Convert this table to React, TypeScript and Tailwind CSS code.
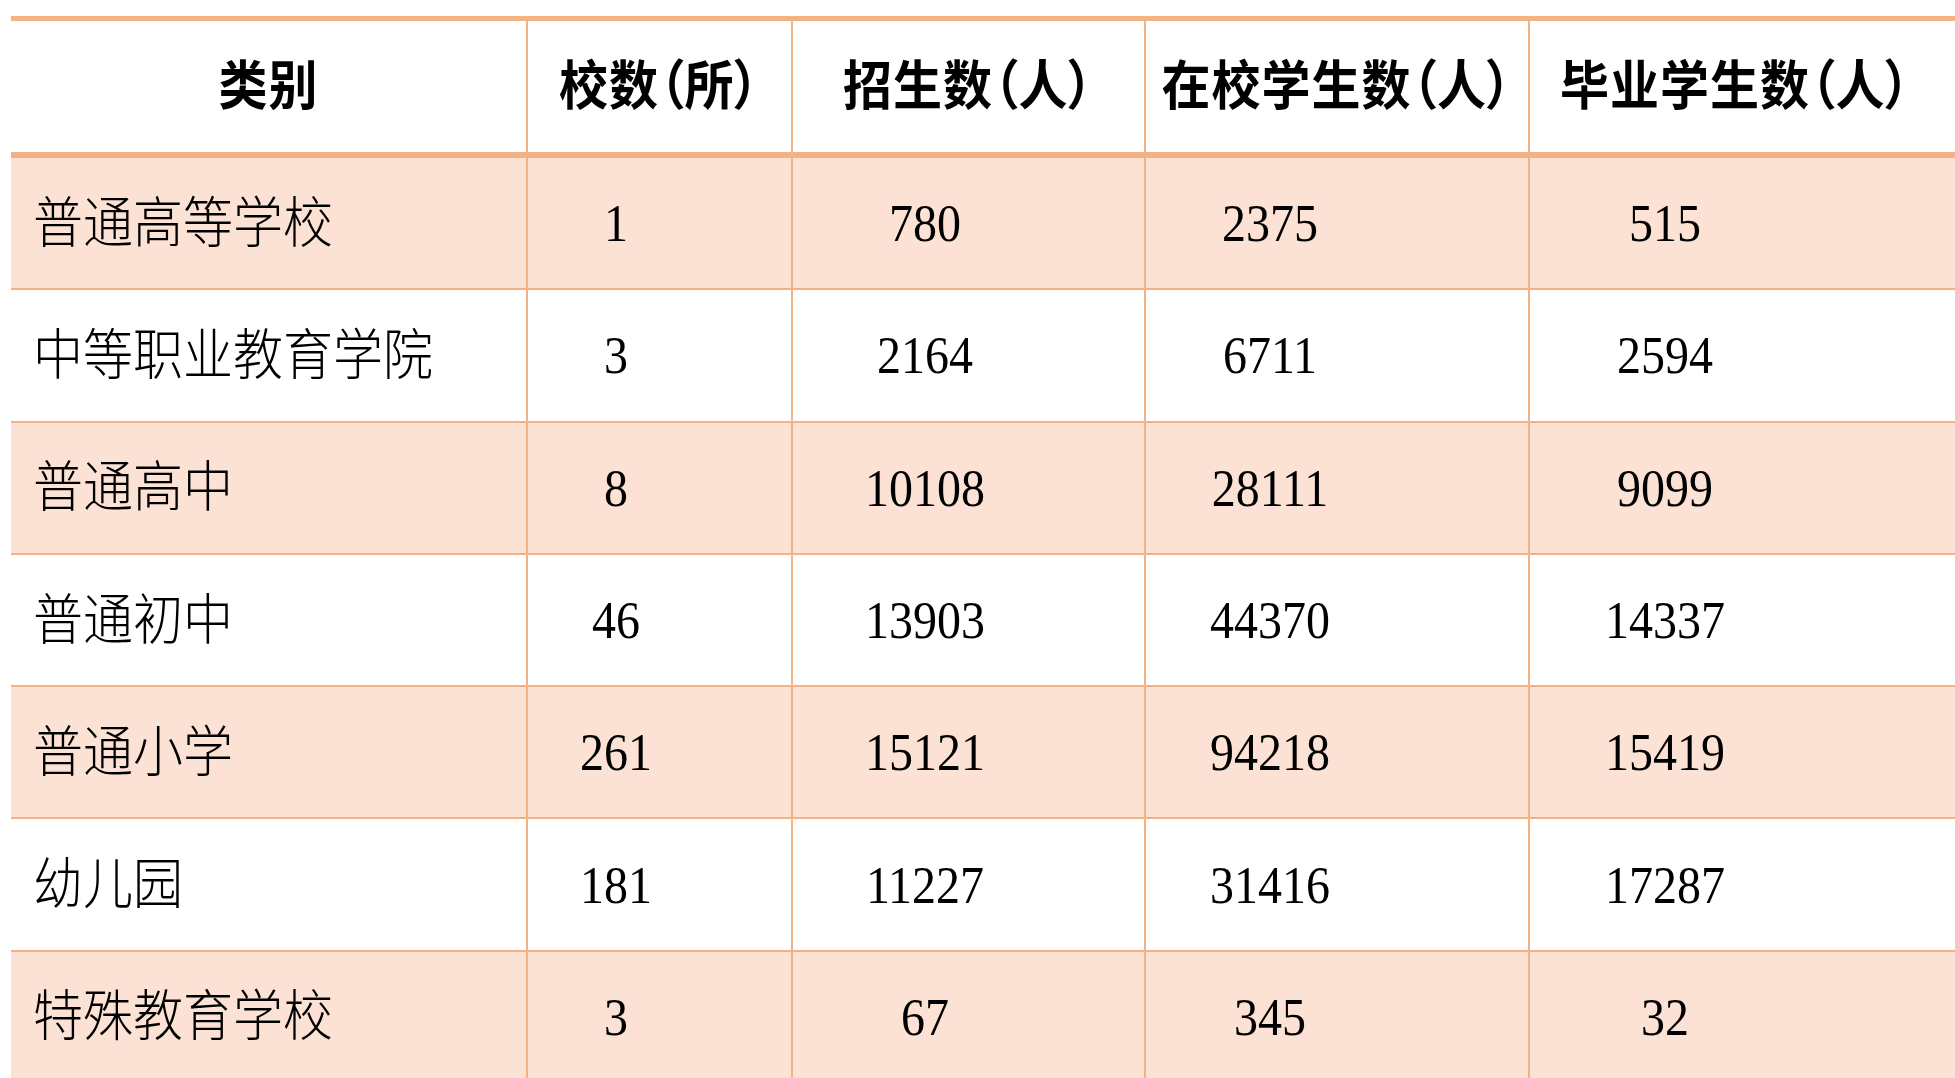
const headers = ['类别', '校数（所）', '招生数（人）', '在校学生数（人）', '毕业学生数（人）']

const rows: [string, string, string, string, string][] = [
  ['普通高等学校', '1', '780', '2375', '515'],
  ['中等职业教育学院', '3', '2164', '6711', '2594'],
  ['普通高中', '8', '10108', '28111', '9099'],
  ['普通初中', '46', '13903', '44370', '14337'],
  ['普通小学', '261', '15121', '94218', '15419'],
  ['幼儿园', '181', '11227', '31416', '17287'],
  ['特殊教育学校', '3', '67', '345', '32'],
]

// column widths incl. the 2px right rule
const colWidths = ['w-[517px]', 'w-[265px]', 'w-[353px]', 'w-[384px]', 'w-[460px]']
// numbers sit left of centre in each cell
const numPad = ['', 'pr-[87px]', 'pr-[87px]', 'pr-[134px]', 'pr-[188px]']
const headPad = ['justify-center', 'justify-center', 'justify-center', 'justify-center', 'justify-start pl-[30px]']

export default function App() {
  return (
    <div
      className="w-screen h-screen overflow-hidden bg-white pt-4 pl-[11px] text-black"
      style={{ fontFamily: "'Liberation Serif', 'Noto Sans CJK SC', serif" }}
    >
      <div className="w-[1979px] border-t-[5px] border-[#F4B183]">
        {/* Header */}
        <div className="flex h-[137px] border-b-[6px] border-[#F4B183] [font-feature-settings:'palt']">
          {headers.map((h, i) => (
            <div
              key={h}
              className={`${colWidths[i]} ${headPad[i]} shrink-0 flex items-center whitespace-nowrap border-r-2 border-[#F4B183] text-[49px] font-bold`}
            >
              <span className="inline-block scale-y-110 tracking-[1px]">{h}</span>
            </div>
          ))}
        </div>

        {/* Body */}
        {rows.map((row, r) => (
          <div
            key={row[0]}
            className={`flex h-[132.3px] border-b-2 border-[#F4B183] ${r % 2 === 0 ? 'bg-[#FBE2D5]' : 'bg-white'}`}
          >
            {row.map((cell, i) =>
              i === 0 ? (
                <div
                  key={i}
                  className={`${colWidths[i]} shrink-0 flex items-center pl-[22px] whitespace-nowrap border-r-2 border-[#F4B183] text-[50px] font-light`}
                >
                  <span className="inline-block scale-y-110">{cell}</span>
                </div>
              ) : (
                <div
                  key={i}
                  className={`${colWidths[i]} ${numPad[i]} shrink-0 flex items-center justify-center border-r-2 border-[#F4B183] text-[48px]`}
                >
                  <span className="inline-block scale-y-110">{cell}</span>
                </div>
              )
            )}
          </div>
        ))}
      </div>
    </div>
  )
}
